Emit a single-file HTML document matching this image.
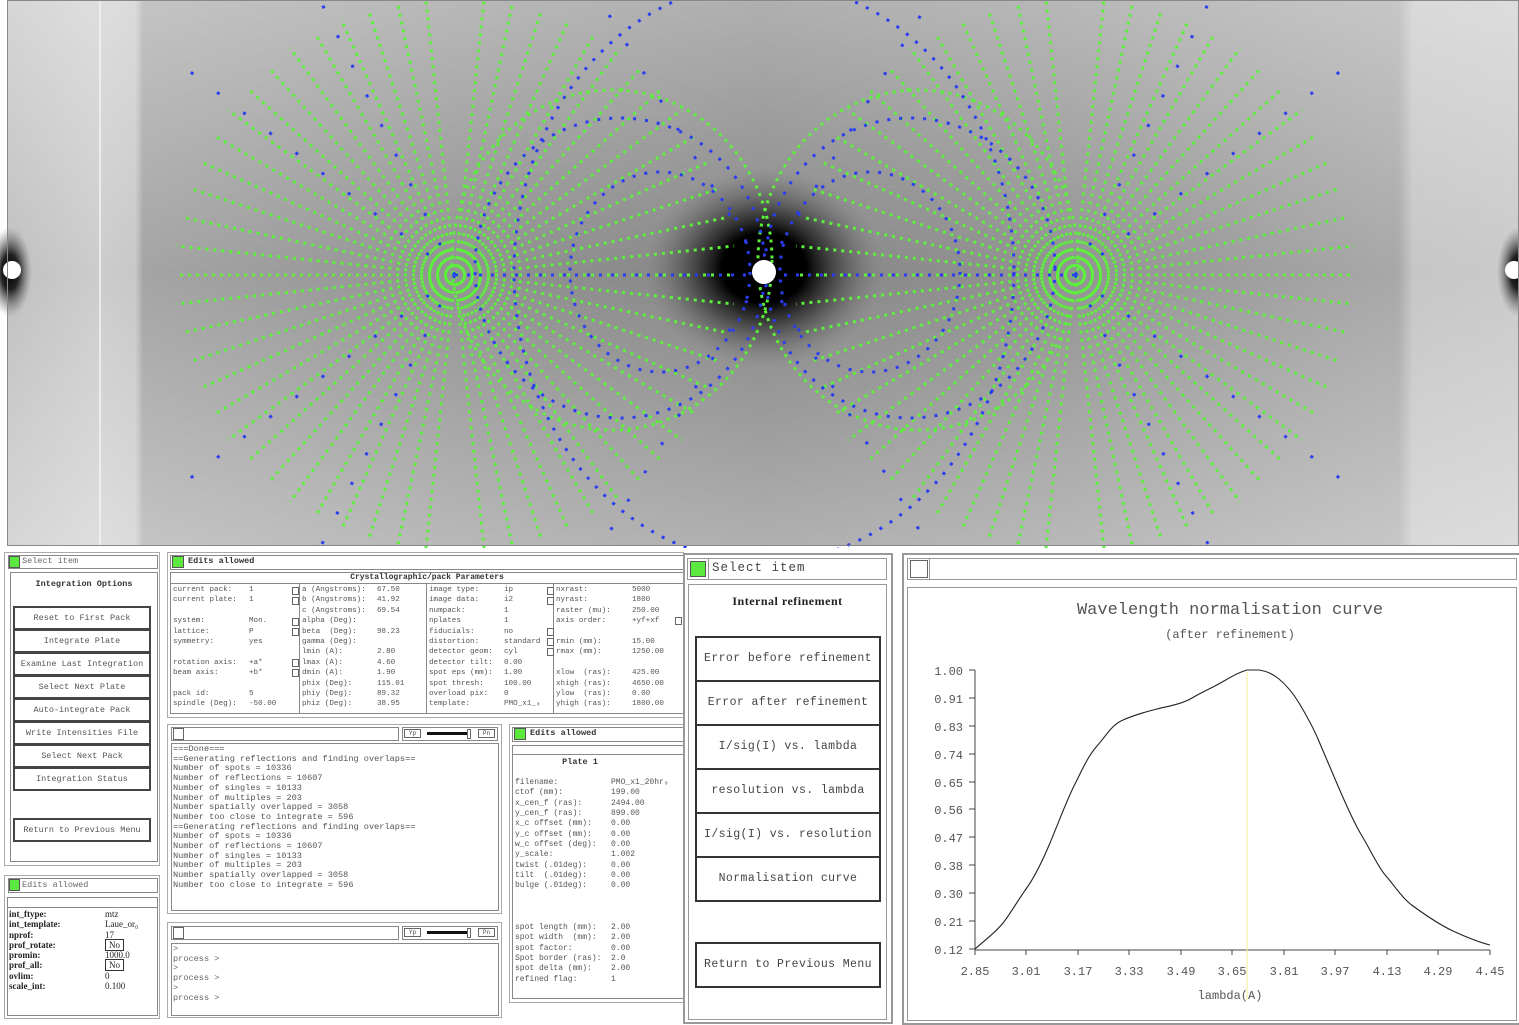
<!DOCTYPE html>
<html><head><meta charset="utf-8">
<style>
*{margin:0;padding:0;box-sizing:border-box}
body{width:1519px;height:1025px;background:#fff;position:relative;overflow:hidden;font-family:"Liberation Mono",monospace;color:#444}
.a{position:absolute}
.bx{position:absolute;border:1px solid #888;background:#fff}
.bx2{position:absolute;border:2px solid #999;background:#fff}
.g{position:absolute;background:#5be83f;border:1px solid #555}
.t{position:absolute;font-size:9px;white-space:pre;line-height:10.4px;color:#555}
.c7{font-size:7.6px}
.btn{position:absolute;border:2px solid #444;background:#fff;font-size:8.5px;text-align:center;color:#555;font-family:"Liberation Mono",monospace;white-space:nowrap}
.bb{position:absolute;border:2px solid #333;background:#fff;font-size:11.5px;text-align:center;color:#444;letter-spacing:.4px;white-space:nowrap}
</style></head><body>

<svg class="a" style="left:0;top:0" width="1519" height="548">
<defs>
<linearGradient id="h" x1="0" x2="1" y1="0" y2="0">
<stop offset="0" stop-color="#c0c0c0"/><stop offset=".06" stop-color="#cccccc"/><stop offset=".085" stop-color="#c8c8c8"/><stop offset=".09" stop-color="#a4a4a4"/><stop offset=".3" stop-color="#929292"/><stop offset=".5" stop-color="#858585"/><stop offset=".7" stop-color="#929292"/><stop offset=".92" stop-color="#a8a8a8"/><stop offset=".93" stop-color="#c6c6c6"/><stop offset="1" stop-color="#cacaca"/>
</linearGradient>
<linearGradient id="v" x1="0" x2="0" y1="0" y2="1">
<stop offset="0" stop-color="#fff" stop-opacity=".35"/><stop offset=".5" stop-color="#fff" stop-opacity="0"/><stop offset="1" stop-color="#fff" stop-opacity=".35"/>
</linearGradient>
<radialGradient id="c"><stop offset="0" stop-color="#000"/><stop offset=".35" stop-color="#000"/><stop offset=".6" stop-color="#333" stop-opacity=".7"/><stop offset="1" stop-color="#777" stop-opacity="0"/></radialGradient>
<radialGradient id="e"><stop offset="0" stop-color="#000"/><stop offset=".4" stop-color="#222"/><stop offset="1" stop-color="#777" stop-opacity="0"/></radialGradient>
</defs>
<rect x="7" y="0" width="1512" height="546" fill="url(#h)"/>
<rect x="7" y="0" width="1512" height="546" fill="url(#v)"/>
<line x1="100" y1="0" x2="100" y2="546" stroke="#f4f4f4" stroke-width="1.5"/>
<ellipse cx="764" cy="268" rx="120" ry="100" fill="url(#c)"/>
<ellipse cx="10" cy="272" rx="22" ry="45" fill="url(#e)"/>
<ellipse cx="1519" cy="272" rx="22" ry="45" fill="url(#e)"/>
<g fill="none" stroke="#5cf03c" stroke-width="3" stroke-dasharray="3 5">
<path d="M455 275L735 275M455 275L729 217M455 275L729 333M455 275L711 161M455 275L711 389M455 275L682 110M455 275L682 440M455 275L642 67M455 275L642 483M455 275L595 33M455 275L595 517M455 275L542 9M455 275L542 541M455 275L484 0M455 275L484 548M455 275L426 0M455 275L426 548M455 275L368 9M455 275L368 541M455 275L315 33M455 275L315 517M455 275L268 67M455 275L268 483M455 275L228 110M455 275L228 440M455 275L199 161M455 275L199 389M455 275L181 217M455 275L181 333M455 275L175 275"/>
<path d="M455 275L734 246M455 275L734 304M455 275L176 246M455 275L176 304M455 275L721 188M455 275L721 362M455 275L189 188M455 275L189 362M455 275L697 135M455 275L697 415M455 275L213 135M455 275L213 415M455 275L663 88M455 275L663 462M455 275L247 88M455 275L247 462M455 275L620 48M455 275L620 502M455 275L290 48M455 275L290 502M455 275L569 19M455 275L569 531M455 275L341 19M455 275L341 531M455 275L513 1M455 275L513 549M455 275L397 1M455 275L397 549"/>
<path d="M1075 275L795 275M1075 275L801 217M1075 275L801 333M1075 275L819 161M1075 275L819 389M1075 275L848 110M1075 275L848 440M1075 275L888 67M1075 275L888 483M1075 275L935 33M1075 275L935 517M1075 275L988 9M1075 275L988 541M1075 275L1046 0M1075 275L1046 548M1075 275L1104 0M1075 275L1104 548M1075 275L1162 9M1075 275L1162 541M1075 275L1215 33M1075 275L1215 517M1075 275L1262 67M1075 275L1262 483M1075 275L1302 110M1075 275L1302 440M1075 275L1331 161M1075 275L1331 389M1075 275L1349 217M1075 275L1349 333M1075 275L1355 275"/>
<path d="M1075 275L796 246M1075 275L796 304M1075 275L1354 246M1075 275L1354 304M1075 275L809 188M1075 275L809 362M1075 275L1341 188M1075 275L1341 362M1075 275L833 135M1075 275L833 415M1075 275L1317 135M1075 275L1317 415M1075 275L867 88M1075 275L867 462M1075 275L1283 88M1075 275L1283 462M1075 275L910 48M1075 275L910 502M1075 275L1240 48M1075 275L1240 502M1075 275L961 19M1075 275L961 531M1075 275L1189 19M1075 275L1189 531M1075 275L1017 1M1075 275L1017 549M1075 275L1133 1M1075 275L1133 549"/>
<ellipse cx="612" cy="260" rx="160" ry="170"/>
<ellipse cx="918" cy="260" rx="160" ry="170"/>
</g>
<g fill="none" stroke="#2a3df0" stroke-width="3" stroke-dasharray="3 9">
<ellipse cx="620" cy="268" rx="145" ry="150"/>
<ellipse cx="910" cy="268" rx="145" ry="150"/>
<ellipse cx="660" cy="272" rx="90" ry="100"/>
<ellipse cx="870" cy="272" rx="90" ry="100"/>
<ellipse cx="764" cy="272" rx="250" ry="290"/>
<path d="M455 275L765 275M1075 275L765 275"/>
</g>
<g fill="none" stroke="#2a3df0" stroke-width="3" stroke-dasharray="3 30">
<path d="M455 275L175 60M455 275L175 490M1075 275L1355 60M1075 275L1355 490M455 275L320 0M455 275L320 548M1075 275L1210 0M1075 275L1210 548M764 272L600 0M764 272L930 0M764 272L600 548M764 272L930 548"/>
</g>
<circle cx="764" cy="272" r="12" fill="#fff"/>
<circle cx="12" cy="270" r="9" fill="#fff"/>
<circle cx="1514" cy="270" r="9" fill="#fff"/>
<rect x="7.5" y="0.5" width="1511" height="545" fill="none" stroke="#888"/>
</svg>

<!-- Panel A -->
<div class="bx" style="left:4px;top:552px;width:156px;height:314px;border-color:#aaa"></div>
<div class="bx" style="left:8px;top:555px;width:150px;height:14px"></div>
<div class="g" style="left:9px;top:556px;width:11px;height:12px"></div>
<div class="t" style="left:22px;top:556px;font-size:8.5px;color:#666">Select item</div>
<div class="bx" style="left:10px;top:572px;width:148px;height:290px"></div>
<div class="t" style="left:10px;top:579px;width:148px;text-align:center;font-weight:bold;font-size:8.5px;color:#333">Integration Options</div>
<div class="btn" style="left:13px;top:606px;width:138px;height:24px;line-height:21px">Reset to First Pack</div>
<div class="btn" style="left:13px;top:629px;width:138px;height:24px;line-height:21px">Integrate Plate</div>
<div class="btn" style="left:13px;top:652px;width:138px;height:24px;line-height:21px">Examine Last Integration</div>
<div class="btn" style="left:13px;top:675px;width:138px;height:24px;line-height:21px">Select Next Plate</div>
<div class="btn" style="left:13px;top:698px;width:138px;height:24px;line-height:21px">Auto-integrate Pack</div>
<div class="btn" style="left:13px;top:721px;width:138px;height:24px;line-height:21px">Write Intensities File</div>
<div class="btn" style="left:13px;top:744px;width:138px;height:24px;line-height:21px">Select Next Pack</div>
<div class="btn" style="left:13px;top:767px;width:138px;height:24px;line-height:21px">Integration Status</div>
<div class="btn" style="left:13px;top:818px;width:138px;height:24px;line-height:21px">Return to Previous Menu</div>

<!-- Panel B -->
<div class="bx" style="left:4px;top:875px;width:156px;height:144px;border-color:#aaa"></div>
<div class="bx" style="left:8px;top:878px;width:150px;height:15px"></div>
<div class="g" style="left:9px;top:879px;width:11px;height:12px"></div>
<div class="t" style="left:22px;top:880px;font-size:8.5px;color:#666">Edits allowed</div>
<div class="bx" style="left:7px;top:897px;width:151px;height:119px"></div>
<div class="a" style="left:7px;top:907px;width:151px;border-top:1px solid #888"></div>
<div class="t" style="left:9px;top:909px;color:#222;font-weight:bold;font-family:'Liberation Serif',serif;font-size:9px;line-height:10.3px">int_ftype:
int_template:
nprof:
prof_rotate:
promin:
prof_all:
ovlim:
scale_int:</div>
<div class="t" style="left:105px;top:909px;color:#222;font-family:'Liberation Serif',serif;font-size:9px;line-height:10.3px">mtz
Laue_or₀
17
<span style="border:1px solid #333;padding:0 3px">No</span>
1000.0
<span style="border:1px solid #333;padding:0 3px">No</span>
0
0.100</div>

<!-- Panel C -->
<div class="bx" style="left:167px;top:552px;width:517px;height:166px;border-color:#aaa;border-right:none"></div>
<div class="bx" style="left:170px;top:555px;width:514px;height:15px;border-right:none"></div>
<div class="g" style="left:172px;top:556px;width:12px;height:12px"></div>
<div class="t" style="left:188px;top:556px;font-weight:bold;color:#333;font-size:8.5px">Edits allowed</div>
<div class="bx" style="left:170px;top:572px;width:514px;height:142px;border-right:none"></div>
<div class="a" style="left:170px;top:583px;width:514px;border-top:1px solid #888"></div>
<div class="t" style="left:170px;top:573px;width:514px;text-align:center;font-weight:bold;color:#333;font-size:8px">Crystallographic/pack Parameters</div>
<div class="a" style="left:299px;top:583px;height:131px;border-left:1px solid #888"></div>
<div class="a" style="left:426px;top:583px;height:131px;border-left:1px solid #888"></div>
<div class="a" style="left:553px;top:583px;height:131px;border-left:1px solid #888"></div>
<div class="t c7" style="left:173px;top:585px">current pack:
current plate:

system:
lattice:
symmetry:

rotation axis:
beam axis:

pack id:
spindle (Deg):</div>
<div class="t c7" style="left:249px;top:585px">1
1

Mon.
P
yes

+a*
+b*

5
-50.00</div>
<div class="t c7" style="left:302px;top:585px">a (Angstroms):
b (Angstroms):
c (Angstroms):
alpha (Deg):
beta  (Deg):
gamma (Deg):
lmin (A):
lmax (A):
dmin (A):
phix (Deg):
phiy (Deg):
phiz (Deg):</div>
<div class="t c7" style="left:377px;top:585px">67.50
41.92
69.54

98.23

2.80
4.60
1.90
115.01
89.32
38.95</div>
<div class="t c7" style="left:429px;top:585px">image type:
image data:
numpack:
nplates
fiducials:
distortion:
detector geom:
detector tilt:
spot eps (mm):
spot thresh:
overload pix:
template:</div>
<div class="t c7" style="left:504px;top:585px">ip
i2
1
1
no
standard
cyl
0.00
1.00
100.00
0
PMO_x1_₀</div>
<div class="t c7" style="left:556px;top:585px">nxrast:
nyrast:
raster (mu):
axis order:

rmin (mm):
rmax (mm):

xlow  (ras):
xhigh (ras):
ylow  (ras):
yhigh (ras):</div>
<div class="t c7" style="left:632px;top:585px">5000
1800
250.00
+yf+xf

15.00
1250.00

425.00
4650.00
0.00
1800.00</div>
<div class="a" style="left:292px;top:587px;width:7px;height:8px;border:1px solid #666"></div>
<div class="a" style="left:292px;top:597px;width:7px;height:8px;border:1px solid #666"></div>
<div class="a" style="left:292px;top:618px;width:7px;height:8px;border:1px solid #666"></div>
<div class="a" style="left:292px;top:628px;width:7px;height:8px;border:1px solid #666"></div>
<div class="a" style="left:292px;top:659px;width:7px;height:8px;border:1px solid #666"></div>
<div class="a" style="left:292px;top:669px;width:7px;height:8px;border:1px solid #666"></div>
<div class="a" style="left:547px;top:587px;width:7px;height:8px;border:1px solid #666"></div>
<div class="a" style="left:547px;top:597px;width:7px;height:8px;border:1px solid #666"></div>
<div class="a" style="left:547px;top:628px;width:7px;height:8px;border:1px solid #666"></div>
<div class="a" style="left:547px;top:638px;width:7px;height:8px;border:1px solid #666"></div>
<div class="a" style="left:547px;top:648px;width:7px;height:8px;border:1px solid #666"></div>
<div class="a" style="left:675px;top:617px;width:7px;height:8px;border:1px solid #666"></div>

<!-- Panel D log -->
<div class="bx" style="left:167px;top:724px;width:335px;height:190px;border-color:#aaa"></div>
<div class="bx" style="left:171px;top:727px;width:228px;height:14px"></div>
<div class="bx" style="left:173px;top:728px;width:11px;height:12px;border-color:#666"></div>
<div class="bx" style="left:402px;top:727px;width:96px;height:14px"></div>
<div class="a" style="left:404px;top:729px;width:17px;height:9px;border:1px solid #666;font-size:6px;line-height:7px;text-align:center">Yp</div>
<div class="a" style="left:427px;top:732px;width:42px;height:3px;background:#111"></div>
<div class="a" style="left:467px;top:729px;width:4px;height:10px;border:1px solid #666;background:#fff"></div>
<div class="a" style="left:478px;top:729px;width:17px;height:9px;border:1px solid #666;font-size:6px;line-height:7px;text-align:center">Pn</div>
<div class="bx" style="left:171px;top:743px;width:328px;height:168px"></div>
<div class="t" style="left:173px;top:745px;line-height:9.7px;font-size:8.6px;color:#555">===Done===
==Generating reflections and finding overlaps==
Number of spots = 10336
Number of reflections = 10607
Number of singles = 10133
Number of multiples = 203
Number spatially overlapped = 3058
Number too close to integrate = 596
==Generating reflections and finding overlaps==
Number of spots = 10336
Number of reflections = 10607
Number of singles = 10133
Number of multiples = 203
Number spatially overlapped = 3058
Number too close to integrate = 596</div>

<!-- Panel E -->
<div class="bx" style="left:167px;top:922px;width:335px;height:96px;border-color:#aaa"></div>
<div class="bx" style="left:171px;top:926px;width:228px;height:14px"></div>
<div class="bx" style="left:173px;top:927px;width:11px;height:12px;border-color:#666"></div>
<div class="bx" style="left:402px;top:926px;width:96px;height:14px"></div>
<div class="a" style="left:404px;top:928px;width:17px;height:9px;border:1px solid #666;font-size:6px;line-height:7px;text-align:center">Yp</div>
<div class="a" style="left:427px;top:931px;width:42px;height:3px;background:#111"></div>
<div class="a" style="left:467px;top:928px;width:4px;height:10px;border:1px solid #666;background:#fff"></div>
<div class="a" style="left:478px;top:928px;width:17px;height:9px;border:1px solid #666;font-size:6px;line-height:7px;text-align:center">Pn</div>
<div class="bx" style="left:171px;top:943px;width:328px;height:73px"></div>
<div class="t" style="left:173px;top:945px;line-height:9.7px;font-size:8.6px;color:#666">&gt;
process &gt;
&gt;
process &gt;
&gt;
process &gt;</div>

<!-- Panel F -->
<div class="bx" style="left:509px;top:724px;width:175px;height:279px;border-color:#aaa;border-right:none"></div>
<div class="bx" style="left:512px;top:727px;width:172px;height:15px;border-right:none"></div>
<div class="g" style="left:514px;top:728px;width:12px;height:12px"></div>
<div class="t" style="left:530px;top:728px;font-weight:bold;color:#333;font-size:8.5px">Edits allowed</div>
<div class="bx" style="left:512px;top:745px;width:172px;height:254px;border-right:none"></div>
<div class="a" style="left:512px;top:754px;width:172px;border-top:1px solid #888"></div>
<div class="t" style="left:512px;top:757px;width:136px;text-align:center;font-weight:bold;color:#333;font-size:8.5px">Plate 1</div>
<div class="t" style="left:515px;top:778px;line-height:10.35px;font-size:8px">filename:
ctof (mm):
x_cen_f (ras):
y_cen_f (ras):
x_c offset (mm):
y_c offset (mm):
w_c offset (deg):
y_scale:
twist (.01deg):
tilt  (.01deg):
bulge (.01deg):



spot length (mm):
spot width  (mm):
spot factor:
Spot border (ras):
spot delta (mm):
refined flag:</div>
<div class="t" style="left:611px;top:778px;line-height:10.35px;font-size:8px">PMO_x1_20hr₀
199.00
2494.00
899.00
0.00
0.00
0.00
1.002
0.00
0.00
0.00



2.00
2.00
0.00
2.0
2.00
1</div>

<!-- Panel G -->
<div class="bx2" style="left:683px;top:553px;width:210px;height:471px;border-color:#999"></div>
<div class="bx" style="left:687px;top:558px;width:200px;height:22px;border-color:#999"></div>
<div class="g" style="left:690px;top:561px;width:16px;height:16px"></div>
<div class="a" style="left:708px;top:558px;height:22px;border-left:1px solid #999"></div>
<div class="a" style="left:712px;top:561px;font-size:12.5px;color:#444;letter-spacing:1px">Select item</div>
<div class="bx" style="left:688px;top:584px;width:199px;height:436px;border-color:#999"></div>
<div class="a" style="left:688px;top:594px;width:199px;text-align:center;font-size:12px;font-weight:bold;color:#222;font-family:'Liberation Serif',serif;letter-spacing:.5px">Internal refinement</div>
<div class="bb" style="left:695px;top:636px;width:186px;height:46px;line-height:42px">Error before refinement</div>
<div class="bb" style="left:695px;top:680px;width:186px;height:46px;line-height:42px">Error after refinement</div>
<div class="bb" style="left:695px;top:724px;width:186px;height:46px;line-height:42px">I/sig(I) vs. lambda</div>
<div class="bb" style="left:695px;top:768px;width:186px;height:46px;line-height:42px">resolution vs. lambda</div>
<div class="bb" style="left:695px;top:812px;width:186px;height:46px;line-height:42px">I/sig(I) vs. resolution</div>
<div class="bb" style="left:695px;top:856px;width:186px;height:46px;line-height:42px">Normalisation curve</div>
<div class="bb" style="left:695px;top:942px;width:186px;height:46px;line-height:42px">Return to Previous Menu</div>

<!-- Panel H graph -->
<div class="bx2" style="left:902px;top:553px;width:617px;height:472px;border-color:#999;border-right:none"></div>
<div class="bx" style="left:907px;top:558px;width:610px;height:22px;border-color:#999"></div>
<div class="bx" style="left:910px;top:560px;width:18px;height:18px;border-color:#666"></div>
<div class="a" style="left:929px;top:558px;height:22px;border-left:1px solid #999"></div>
<div class="bx" style="left:907px;top:587px;width:610px;height:434px;border-color:#999"></div>
<svg class="a" style="left:0;top:0" width="1519" height="1025">
<g font-family="Liberation Mono, monospace" fill="#555" font-weight="lighter">
<text x="1230" y="614" font-size="17" text-anchor="middle">Wavelength normalisation curve</text>
<text x="1230" y="638" font-size="12" text-anchor="middle">(after refinement)</text>
<text x="1230" y="999" font-size="12" text-anchor="middle">lambda(A)</text>
<g font-size="12" text-anchor="end">
<text x="963" y="675">1.00</text><text x="963" y="703">0.91</text><text x="963" y="731">0.83</text><text x="963" y="759">0.74</text><text x="963" y="787">0.65</text><text x="963" y="814">0.56</text><text x="963" y="842">0.47</text><text x="963" y="870">0.38</text><text x="963" y="898">0.30</text><text x="963" y="926">0.21</text><text x="963" y="954">0.12</text>
</g>
<g font-size="12" text-anchor="middle">
<text x="975" y="975">2.85</text><text x="1026" y="975">3.01</text><text x="1078" y="975">3.17</text><text x="1129" y="975">3.33</text><text x="1181" y="975">3.49</text><text x="1232" y="975">3.65</text><text x="1284" y="975">3.81</text><text x="1335" y="975">3.97</text><text x="1387" y="975">4.13</text><text x="1438" y="975">4.29</text><text x="1490" y="975">4.45</text>
</g>
</g>
<g stroke="#444" stroke-width="1" fill="none">
<path d="M975 670V950H1490"/>
<path d="M969 670H975M969 698H975M969 726H975M969 754H975M969 782H975M969 809H975M969 837H975M969 865H975M969 893H975M969 921H975M969 949H975"/>
<path d="M975 950v5M1026 950v5M1078 950v5M1129 950v5M1181 950v5M1232 950v5M1284 950v5M1335 950v5M1387 950v5M1438 950v5M1490 950v5"/>
</g>
<line x1="1247" y1="672" x2="1247" y2="1000" stroke="#f2f08a" stroke-width="1"/>
<path d="M975 949C985 940 995 933 1003 923S1018 900 1026 889S1042 862 1050 843S1066 802 1074 786S1088 756 1097 746S1111 726 1121 721S1145 712 1157 709S1182 704 1192 698S1214 687 1224 681S1240 672 1247 670L1259 670C1266 671 1273 674 1279 679S1293 693 1299 703S1312 725 1318 739S1332 772 1338 786S1354 823 1362 836S1378 867 1386 876S1402 898 1413 906S1440 925 1453 931S1478 942 1490 945" fill="none" stroke="#222" stroke-width="1.1"/>
</svg>
</body></html>
